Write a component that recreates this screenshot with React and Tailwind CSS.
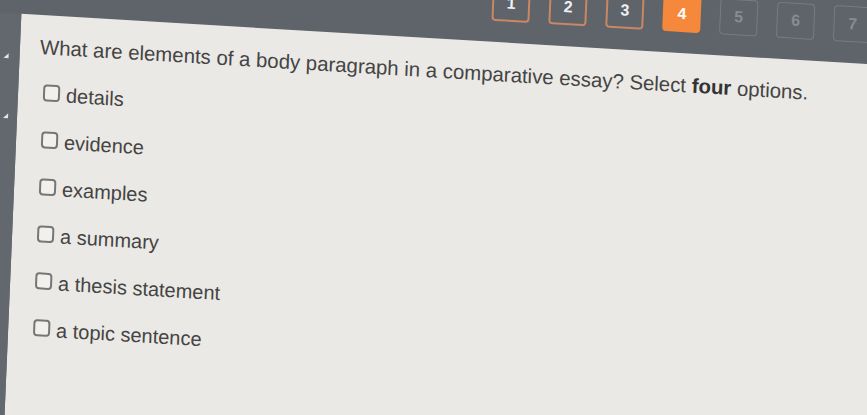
import React from 'react'

const steps = [
  { n: 1, state: 'done' },
  { n: 2, state: 'done' },
  { n: 3, state: 'done' },
  { n: 4, state: 'current' },
  { n: 5, state: 'todo' },
  { n: 6, state: 'todo' },
  { n: 7, state: 'todo' },
]

const options = ['details', 'evidence', 'examples', 'a summary', 'a thesis statement', 'a topic sentence']

const stepStyles = {
  done: 'border-2 border-[#c98763] text-[#eef0f2]',
  current: 'bg-[#f5883a] text-white',
  todo: 'border border-[#767c82] text-[#868c92]',
}

function StepButton({ n, state }) {
  return (
    <button
      className={`flex h-[36px] w-[38px] shrink-0 items-center justify-center rounded-[4px] text-[16px] font-bold ${stepStyles[state]}`}
    >
      {n}
    </button>
  )
}

function Option({ label }) {
  return (
    <label className="flex h-[24px] items-start gap-[6px]">
      <span className="mt-[2px] h-[17px] w-[17px] shrink-0 rounded-[4px] border-2 border-[#767676] bg-[#f1f0ed]" />
      <span className="text-[20px] leading-[24px] text-[#444]">{label}</span>
    </label>
  )
}

export default function App() {
  return (
    <div className="h-[415px] w-[867px] overflow-hidden bg-[#63696f] font-['Liberation_Sans',Arial,sans-serif]">
      {/* screen is shot at a slight angle */}
      <div className="-ml-[40px] -mt-[70px] min-h-[540px] w-[980px] origin-[80px_117px] [transform:rotate(3.4deg)_skewX(1deg)]">
        {/* question navigator */}
        <div className="flex h-[85px] items-end gap-[19px] bg-[#5e646a] pb-[21px] pl-[530px]">
          {steps.map((s) => (
            <StepButton key={s.n} {...s} />
          ))}
        </div>

        <div className="flex min-h-[455px]">
          <div className="relative w-[60px] shrink-0 bg-[#62686e]">
            <span className="absolute left-[44px] top-[40px] h-0 w-0 border-b-[5px] border-l-[5px] border-b-[#e4e4e4] border-l-transparent" />
            <span className="absolute left-[46px] top-[100px] h-0 w-0 border-b-[5px] border-l-[5px] border-b-[#e4e4e4] border-l-transparent" />
          </div>

          <div className="flex-1 bg-[#ebe9e5] pl-[20px] pt-[20px]">
            <p className="text-[20.4px] leading-[24px] text-[#444]">
              What are elements of a body paragraph in a comparative essay? Select <b className="text-[#333]">four</b> options.
            </p>
            <div className="mt-[23px] flex flex-col gap-[23px] pl-[5px]">
              {options.map((o) => (
                <Option key={o} label={o} />
              ))}
            </div>
          </div>
        </div>
      </div>
    </div>
  )
}
